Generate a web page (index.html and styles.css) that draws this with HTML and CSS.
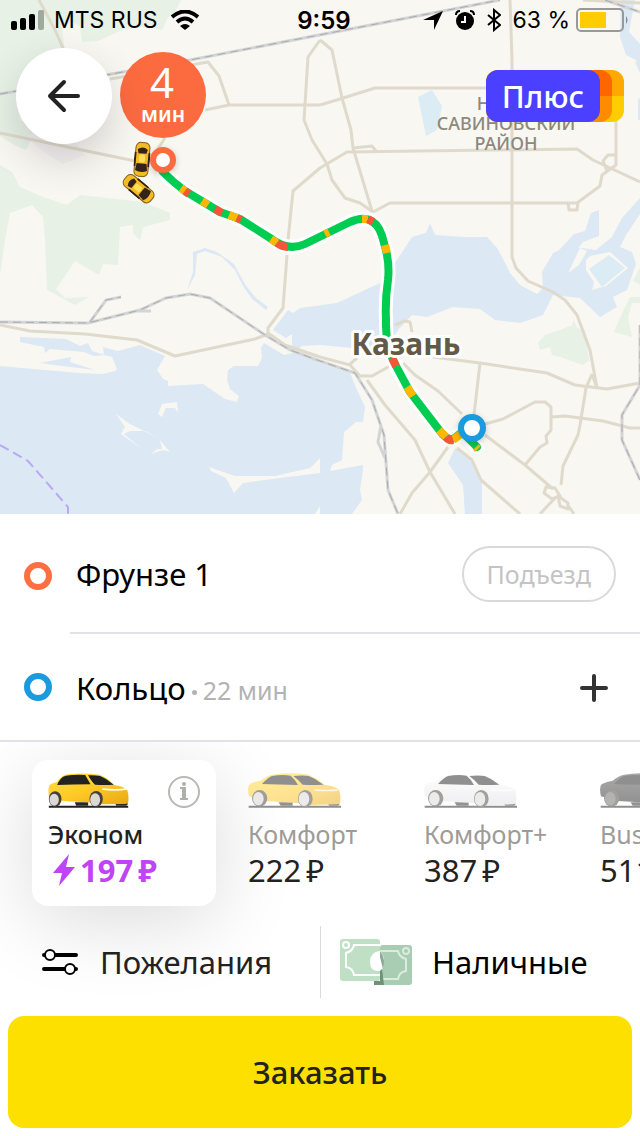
FILE: index.html
```html
<!DOCTYPE html>
<html lang="ru">
<head>
    <meta charset="UTF-8">
    <meta name="viewport" content="width=device-width, initial-scale=1">
    <title>Такси - заказ</title>
    <link rel="stylesheet" href="styles.css">
</head>
<body>
    <svg class="defs" width="0" height="0">
        <linearGradient id="yellow" x1="0" y1="0" x2="1" y2="1">
            <stop offset="0" stop-color="#ffe03a"/>
            <stop offset="0.5" stop-color="#ffca28"/>
            <stop offset="1" stop-color="#e8a712"/>
        </linearGradient>
        <linearGradient id="white" x1="0" y1="0" x2="0" y2="1">
            <stop offset="0" stop-color="#ffffff"/>
            <stop offset="1" stop-color="#dfdfe3"/>
        </linearGradient>
        <linearGradient id="black" x1="0" y1="0" x2="0" y2="1">
            <stop offset="0" stop-color="#555555"/>
            <stop offset="1" stop-color="#222222"/>
        </linearGradient>
        <symbol id="car-short" viewBox="0 0 242 105">
            <path d="M2 98h238v6H2z" fill="#222"/>
            <path d="M80 88h40v10H84zM200 86h38v9q-2 3-6 3h-28z" fill="#2b2723"/>
            <path d="M3 76Q-3 40 8 33q10-5 19-6Q40 5 62 3q50-4 92 2 24 8 42 30 28 5 41 15 6 18 3 38-2 6-12 5l-66 1-44-6-60-3-38-4z"/>
            <path d="M27 36Q36 12 53 8q30-5 58-2l16 28q-50 0-100 2zM118 7q22-1 38 2 20 8 41 26-30 2-56 0-8-4-23-28z" fill="#222"/>
            <path d="M134 33Q124 20 116 5" fill="none" stroke="#ffdc3c" stroke-width="4"/>
            <path d="M162 48q40 5 74 0" fill="none" stroke="#fff" stroke-width="5"/>
            <ellipse cx="21" cy="78" rx="19" ry="23" fill="#45403a"/>
            <ellipse cx="18" cy="80" rx="14" ry="18" fill="#dcd8d6"/>
            <ellipse cx="144" cy="78" rx="20" ry="24" fill="#45403a"/>
            <ellipse cx="141" cy="80" rx="15" ry="19" fill="#dcd8d6"/>
        </symbol>
        <symbol id="car-long" viewBox="0 0 279 105">
            <path d="M2 98h277v6H2z" fill="#222"/>
            <path d="M92 88h42v10H98zM236 88h38v7q-2 3-6 3h-24z" fill="#2b2723"/>
            <path d="M3 70Q-4 40 6 33q14-8 32-10Q56 8 72 5q58-8 110 0 24 10 48 30 32 5 43 15 7 16 3 40-3 4-10 4l-78 2-50-7-84-5z"/>
            <path d="M42 33Q60 13 72 9q30-5 56-1 16 14 22 28-60-1-108-3zM136 9q28-3 46 0 22 8 44 26-36 2-62 0-12-14-28-26z" fill="#222"/>
            <path d="M200 51q42 3 70 0" fill="none" stroke="#fff" stroke-opacity="0.8" stroke-width="4"/>
            <ellipse cx="35" cy="76" rx="23" ry="25" fill="#45403a"/>
            <ellipse cx="172" cy="77" rx="22" ry="26" fill="#45403a"/>
        </symbol>
        <symbol id="rims" viewBox="0 0 279 105">
            <ellipse cx="31" cy="77" rx="16" ry="20"/>
            <ellipse cx="168" cy="78" rx="16" ry="21"/>
        </symbol>
        <symbol id="taxi-top" viewBox="0 0 16 36">
            <rect x="1" y="1" width="14" height="34" rx="5" fill="#f3bb24" stroke="#80601a"/>
            <path d="M1 11v14M15 11v14" stroke="#33231a" stroke-width="2"/>
            <path d="M3 8q5-4 10 0l-1 4H4zM3 22h10l1 7q-6 3-12 0z" fill="#33231a"/>
            <rect x="5" y="13" width="6" height="8" rx="2" fill="#ffdf58"/>
        </symbol>
    </svg>

    <main class="page">
        <section class="map">
            <svg class="map_canvas" viewBox="0 0 640 514" preserveAspectRatio="xMidYMid slice">
                <!-- parks -->
                <g fill="#e7f1e6">
                    <path d="M0 0H181L174 14 168 17 162 30 148 26 122 30 98 41 82 42 80 26 72 22 62 28 66 60 16 90 20 120 36 130 26 150 14 145 0 136z"/>
                    <path d="M0 165L12 172 20 187 43 197 67 205 80 195 143 202 170 213V220L143 227 140 240 133 233V225L120 227 118 265 103 264 99 275 75 261 56 289 65 298 89 297 75 305 47 290 45 240 43 217 32 205 10 213 5 240 0 275z"/>
                    <path d="M538 343L545 335 560 330 572 325 574 320 577 328 585 330 589 360 583 365 560 357 552 355 550 347 540 350zM630 297H640V303L632 303 628 317 632 337 614 332 620 318zM640 268V285L633 281z"/>
                </g>
                <path d="M25 137l20-8 30 13 10 13-22 9-20-13z" fill="#f5eff0"/>
                <!-- water -->
                <g fill="#dce8f4">
                    <path d="M0 366L79 373 103 374 115 371 117 369 112 357 104 355 103 347 118 351 140 345 165 356 157 370 163 379 168 381V386L203 384 225 399 237 402 239 396 230 389 227 380 228 370 234 366 258 366 262 358 261 348 264 343 284 355 292 353 300 352 320 363 350 373 357 390 365 407 363 422 356 422 344 432 342 460 332 465 330 471 363 465 363 470 360 490 362 500 352 514H0z"/>
                    <path d="M20 337L66 339 80 346 88 343 92 351 105 355 94 356 84 352 50 349 45 353 44 347 20 342zM40 363L71 357 70 362 95 370 62 366z"/>
                    <path d="M273 330L288 310 293 313 300 308 337 303 380 283 397 260 412 237 426 233 430 224 435 235 463 237 487 237 497 248 502 257 510 273 520 285 537 294 543 288 542 272 553 253 568 246 596 250 612 237 622 218 640 198V214L626 235 620 247 632 252 636 264 627 290 613 297 617 307 600 317 580 298 553 295 543 315 520 323 495 320 480 309 453 307 427 317 412 315 398 330 385 350 352 348 320 345 302 346 292 353V334L286 338z"/>
                    <path d="M455 448L472 462 482 480V514H465L463 485 448 463zM187 290L193 272V252L205 248 217 252 234 264 246 286 256 298 268 307 266 310 252 299 243 286 235 270 222 257 205 251 197 254 195 275z"/>
                    <path d="M621 0h14l-6 32 11 12V62l-14-7-6-18zM635 62l5-3v14zM550 260l24-26 11-3 6-18 8-3v26l-16 6-14 17zM638 100l2-2v22h-2z"/>
                    <path d="M350 228L370 210 398 220 420 210 421 250 400 262z" fill="#f8f7f2"/>
                    <path d="M397 260L412 237 426 233 430 224 435 235 450 240V275H392z"/>
                </g>
                <path d="M418 97L432 90 442 106 437 130 426 136z" fill="#dcecf4"/>
                <!-- islands -->
                <path d="M116 414L130 424 150 434 160 440 170 452 163 450 151 454 157 449 162 449 160 440 146 431 130 431 124 434 142 449 121 434 125 427zM158 414L162 404 177 402 178 413 175 408 166 408 162 417zM209 467L235 476 275 476 310 468 320 458V473L280 478 243 483 234 493 226 478 211 471zM586 260L590 256 610 252 628 268 606 286 592 290 594 282 586 270zM568 273l12-25 7 3-8 14zM315 514l5-8v8z" fill="#f8f7f2"/>
                <path d="M589 269L609 255 625 268 602 287z" fill="#dcecf4"/>
                <!-- border over water -->
                <path d="M0 445L28 461 68 507V514" fill="none" stroke="#b9a9f5" stroke-width="2" stroke-dasharray="10 5"/>
                <!-- roads -->
                <g class="roads">
                    <path d="M39 0L55 30 75 75M0 133L135 161M110 79L208 62 219 76 229 105H320M205 110L229 105M157 150L165 138M320 40L308 57 304 120 312 140 327 164 332 180 345 198 360 203 373 212"/>
                    <path d="M320 105L340 99 375 88H500M320 40L332 50 342 98 351 130 353 148 372 211M510 0L512 60V257L516 268 528 281 553 292 565 300 577 315 590 350 597 388"/>
                    <path d="M288 240L293 191 320 168 347 152 577 149 593 160 640 182M353 148L372 146 376 151M373 212L390 203H577L600 186 602 175 616 165V115M568 203l1 7h8l1-8M616 155h-8l-5 6 4 10M583 0L640 3"/>
                    <path d="M287 255L283 308 268 328V334L255 339 175 356 137 340 85 334 30 331 0 325M268 333L285 345 320 357 350 365 360 376H372L390 366M349 365l8-7"/>
                    <path d="M395 325L405 321 410 322 412 332M433 357L480 363 547 373 575 385 607 389 640 383M480 363L474 415M403 363L415 375 438 391 462 414M485 424L503 419 535 402H545L551 407V430L546 436 547 443 540 447 525 465M551 417L565 416 603 421 630 428H640"/>
                    <path d="M485 435L525 465 553 489M592 374L586 388 580 425 578 435 563 466 561 485M592 374L597 388M540 514L555 498M367 380L385 405 415 440 430 472 455 514M448 447L430 472 412 493 400 514M457 448L472 460 481 480 520 514M546 487l9 1 5 8-8 3-8-6zM558 496l10 7v6l-8-3zM567 504l7 10"/>
                </g>
                <!-- railways -->
                <g class="rails">
                    <path d="M0 94L190 60 500 0M605 0L640 12M0 322L88 323 140 310 166 298 190 294 210 298 265 335 290 350 320 361 355 373 372 400 384 435 388 490 398 514M90 322L106 300 121 297M136 311h15M381 425l-3 17 7 16M640 325V385L622 415V440L640 480"/>
                </g>
                <g class="rails rails-dash">
                    <path d="M0 94L190 60 500 0M605 0L640 12M0 322L88 323 140 310 166 298 190 294 210 298 265 335 290 350 320 361 355 373 372 400 384 435 388 490 398 514M90 322L106 300 121 297M640 325V385L622 415V440L640 480"/>
                </g>
                <text class="map_district" x="506" y="110">НОВО-</text>
                <text class="map_district" x="506" y="130">САВИНОВСКИЙ</text>
                <text class="map_district" x="506" y="150">РАЙОН</text>
                <!-- route -->
                <g class="route">
                    <path class="route_edge" d="M163 172Q174 183 185 191L220 212 240 219 270 238Q288 252 305 244L350 222Q377 210 384 243 390 262 388 280 385 300 386 320 385 345 396 366L410 392 440 431Q449 443 456 437L462 432 477 447"/>
                    <path class="route_line" d="M163 172Q174 183 185 191L220 212 240 219 270 238Q288 252 305 244L350 222Q377 210 384 243 390 262 388 280 385 300 386 320 385 345 396 366L410 392 440 431Q449 443 456 437L462 432 477 447"/>
                    <path class="route_slow" d="M181 188l4 3M202 201l6 4M229 215l8 3M271 239l6 4M325 234l4-2M362 219l6 0M385 245l2 8M407 387l6 9M439 430l7 7M453 440l9-7M476 447l2 2"/>
                    <path class="route_jam" d="M185 191l4 3M215 209l7 4M237 218l4 2M277 243q5 4 11 4M368 219l5 3M392 358l4 8M446 437q3 4 7 3"/>
                </g>
                <text class="map_city" x="406" y="355">Казань</text>
                <use href="#taxi-top" x="134" y="141" width="16" height="37" transform="rotate(5 142 159)"/>
                <use href="#taxi-top" x="131" y="170" width="16" height="37" transform="rotate(-50 139 189)"/>
                <g class="pins">
                    <circle cx="163" cy="160" r="10" fill="#fff" stroke="#fc6b40" stroke-width="6"/>
                    <circle cx="472" cy="428" r="11" fill="#fff" stroke="#1a9be0" stroke-width="6"/>
                </g>
                <circle cx="163" cy="95" r="43" fill="#fc6b40"/>
                <text class="pin_num" x="162" y="98">4</text>
                <text class="pin_unit" x="163" y="122">мин</text>
            </svg>
            <div class="map_over">
                <header class="status">
                    <div class="status_left">
                        <svg width="34" height="20" viewBox="0 0 34 20">
                            <rect x="0" y="11" width="6" height="9" rx="2"/>
                            <rect x="9" y="8" width="6" height="12" rx="2"/>
                            <rect x="18" y="4" width="6" height="16" rx="2"/>
                            <rect x="27" y="0" width="6" height="20" rx="2" opacity="0.3"/>
                        </svg>
                        <span>MTS RUS</span>
                        <svg class="wifi" width="28" height="20" viewBox="0 0 28 20" fill="none" stroke="#000" stroke-width="4">
                            <path d="M1 7Q14-4 27 7M6 12q8-7 16 0"/>
                            <path d="M9 16q5-4 10 0l-5 4z" fill="#000" stroke="none"/>
                        </svg>
                    </div>
                    <b class="status_time">9:59</b>
                    <div class="status_right">
                        <svg width="20" height="20" viewBox="0 0 20 20"><path d="M0 10L20 1 11 20V10z"/></svg>
                        <svg class="alarm" width="20" height="20" viewBox="0 0 20 20">
                            <circle cx="10" cy="11" r="9"/>
                            <path d="M1 5Q1 1 5 1M19 5Q19 1 15 1" fill="none" stroke="#000" stroke-width="2"/>
                            <path d="M10 6v6H6" fill="none" stroke="#fff" stroke-width="2"/>
                        </svg>
                        <svg class="bt" width="14" height="24" viewBox="0 0 14 24" fill="none" stroke="#000" stroke-width="2"><path d="M1 7l12 10-6 5V2l6 5L1 17"/></svg>
                        <span>63 %</span>
                        <svg class="battery" width="53" height="24" viewBox="0 0 53 24">
                            <rect x="1" y="1" width="46" height="22" rx="4" fill="none" stroke="#999" stroke-width="2"/>
                            <rect x="4" y="4" width="26" height="16" rx="1" fill="#fc0"/>
                            <path d="M50 8q3 4 0 8z" fill="#888"/>
                        </svg>
                    </div>
                </header>
                <div class="tools">
                    <button class="back" type="button" aria-label="Назад">
                        <svg width="34" height="34" viewBox="0 0 34 34" fill="none" stroke="#222" stroke-width="4" stroke-linecap="round" stroke-linejoin="round"><path d="M31 17H3M17 3L3 17l14 14"/></svg>
                    </button>
                    <button class="plus" type="button"><span class="plus_mid"><span class="plus_text">Плюс</span></span></button>
                </div>
            </div>
        </section>

        <section class="address">
            <div class="point">
                <i class="dot"></i>
                <div class="point_row">
                    <span class="point_name">Фрунзе 1</span>
                    <button class="porch" type="button">Подъезд</button>
                </div>
            </div>
            <div class="point point-to">
                <i class="dot dot-to"></i>
                <div class="point_row">
                    <span class="point_name">Кольцо<small>22 мин</small></span>
                    <button class="add" type="button" aria-label="Добавить">
                        <svg width="28" height="28" viewBox="0 0 28 28" stroke="#333" stroke-width="4" stroke-linecap="round"><path d="M14 2v24M2 14h24"/></svg>
                    </button>
                </div>
            </div>
        </section>

        <section class="order">
            <ul class="tariffs">
                <li class="tariff current">
                    <button class="choice" type="button">
                        <svg class="car yellow" width="81" height="35"><use href="#car-short"/></svg>
                        <span class="tariff_name">Эконом</span>
                        <span class="price">
                            <svg width="24" height="32" viewBox="0 0 24 32" fill="#c044f5"><path d="M17 0L1 19h9L7 32 23 13H14z"/></svg>197&thinsp;₽
                        </span>
                    </button>
                    <button class="info" type="button" aria-label="Подробнее">
                        <svg width="32" height="32" viewBox="0 0 32 32">
                            <circle cx="16" cy="16" r="15" fill="none" stroke="#b9b8b5" stroke-width="2"/>
                            <circle cx="16" cy="8" r="2" fill="#b0afac"/>
                            <path d="M12 11h6v11h2v2h-8v-2h2v-9h-2z" fill="#b0afac"/>
                        </svg>
                    </button>
                </li>
                <li class="tariff">
                    <button class="choice" type="button">
                        <svg class="car yellow" width="93" height="35"><use href="#car-long"/><use href="#rims" fill="#dcd8d6"/></svg>
                        <span class="tariff_name">Комфорт</span>
                        <span class="price">222&thinsp;₽</span>
                    </button>
                </li>
                <li class="tariff">
                    <button class="choice" type="button">
                        <svg class="car white" width="93" height="35"><use href="#car-long"/><use href="#rims" fill="#dcd8d6"/></svg>
                        <span class="tariff_name">Комфорт+</span>
                        <span class="price">387&thinsp;₽</span>
                    </button>
                </li>
                <li class="tariff">
                    <button class="choice" type="button">
                        <svg class="car black" width="93" height="35"><use href="#car-long"/><use href="#rims" fill="#6a6a6a"/></svg>
                        <span class="tariff_name">Business</span>
                        <span class="price">511&thinsp;₽</span>
                    </button>
                </li>
            </ul>
            <div class="options">
                <button class="option" type="button">
                    <svg width="36" height="26" viewBox="0 0 36 26" stroke="#000" stroke-width="4" stroke-linecap="round">
                        <path d="M2 6h32M2 20h32"/>
                        <circle cx="8" cy="6" r="5" fill="#fff" stroke-width="2"/>
                        <circle cx="28" cy="20" r="5" fill="#fff" stroke-width="2"/>
                    </svg>
                    Пожелания
                </button>
                <button class="option option-cash" type="button">
                    <svg width="72" height="46" viewBox="0 0 72 46" fill="none">
                        <rect width="40" height="42" rx="3" fill="#c0e0c6"/>
                        <rect x="40" y="6" width="32" height="40" rx="3" fill="#a8cdb2"/>
                        <path d="M40 6H14q-1 6-8 8v14q7 1 8 8h26" stroke="#fff" stroke-width="2"/>
                        <path d="M40 12h18q1 6 8 8v12q-7 1-8 8H40" stroke="#dcebdc" stroke-width="2"/>
                        <circle cx="6" cy="6" r="3" stroke="#fff" stroke-width="2"/>
                        <circle cx="66" cy="12" r="3" stroke="#dcebdc" stroke-width="2"/>
                        <path d="M40 12q-10 1-10 11t10 9q4-2 4-9t-4-11z" fill="#fff"/>
                        <path d="M40 32l2-2 2 16H34v-4h6z" fill="#6f9278"/>
                        <path d="M40 12v6l3 12q3-10-3-18z" fill="#8aa893"/>
                    </svg>
                    Наличные
                </button>
            </div>
            <button class="submit" type="button">Заказать</button>
        </section>
    </main>
</body>
</html>
```
FILE: styles.css
```css
body, ul, li, button {
    margin: 0;
    padding: 0;
}
ul {
    list-style: none;
}
body {
    background-color: #ffffff;
    font-family: "Noto Sans", sans-serif;
    color: #000000;
}
button {
    border: 0;
    background: none;
    font: inherit;
    color: inherit;
    cursor: pointer;
}
svg {
    display: block;
    flex: none;
}
.defs {
    position: absolute;
}
.page {
    display: flex;
    flex-direction: column;
    min-height: 100vh;
}

/* map */
.map {
    display: grid;
    flex: 1 0 320px;
    background-color: #f8f7f2;
    overflow: hidden;
}
.map_canvas, .map_over {
    grid-area: 1 / 1;
    min-height: 0;
}
.map_canvas {
    width: 100%;
    height: 100%;
}
.map_over {
    z-index: 1;
}
.roads {
    fill: none;
    stroke: #dfdacb;
    stroke-width: 3;
    stroke-linejoin: round;
}
.rails {
    fill: none;
    stroke: #d3d4d5;
    stroke-width: 3;
}
.rails-dash {
    stroke: #a9abad;
    stroke-width: 1;
    stroke-dasharray: 8 5;
}
.map text {
    text-anchor: middle;
}
.map_district {
    font-size: 18px;
    font-weight: 500;
    fill: #8c887b;
}
.map_city {
    font-size: 30px;
    font-weight: 700;
    fill: #625a46;
    stroke: #ffffff;
    stroke-width: 6;
    stroke-linejoin: round;
    paint-order: stroke;
}
.route {
    fill: none;
    stroke-linejoin: round;
}
.route_edge {
    stroke: #ffffff;
    stroke-width: 14;
    stroke-linecap: round;
}
.route_line {
    stroke: #00cc52;
    stroke-width: 8;
    stroke-linecap: round;
}
.route_slow {
    stroke: #ffb700;
    stroke-width: 8;
}
.route_jam {
    stroke: #f85438;
    stroke-width: 8;
}
.pins {
    filter: drop-shadow(0 2px 3px rgba(0, 0, 0, 0.2));
}
.pin_num {
    font-size: 42px;
    fill: #ffffff;
}
.pin_unit {
    font-size: 21px;
    font-weight: 600;
    fill: #ffffff;
}

.status {
    display: grid;
    grid-template-columns: 1fr auto 1fr;
    align-items: center;
    height: 40px;
    padding: 0 11px;
    font-family: Inter, sans-serif;
    font-size: 23px;
}
.status_left, .status_right {
    display: flex;
    align-items: center;
    white-space: nowrap;
}
.status_left {
    gap: 9px;
}
.status_right {
    justify-content: flex-end;
    gap: 6px;
}
.status_time {
    padding-left: 8px;
    font-size: 24px;
    font-weight: 600;
}
.wifi {
    margin-left: 4px;
}
.alarm, .bt {
    margin-left: 6px;
}
.bt {
    margin-right: 5px;
}
.tools {
    display: flex;
    align-items: center;
    justify-content: space-between;
    padding: 8px 16px;
}
.back {
    display: flex;
    align-items: center;
    justify-content: center;
    width: 96px;
    height: 96px;
    border-radius: 50%;
    background-color: #ffffff;
    box-shadow: 0 16px 40px rgba(0, 0, 0, 0.16);
}
.plus, .plus_mid, .plus_text {
    display: block;
    border-radius: 12px;
}
.plus {
    padding-right: 12px;
    background-image: linear-gradient(#ffa900 50%, #ffcc00 50%);
}
.plus_mid {
    padding-right: 12px;
    background-image: linear-gradient(#ff6600 50%, #ff8c00 50%);
}
.plus_text {
    padding: 0 16px;
    background-color: #4b40ff;
    color: #ffffff;
    font-size: 31px;
    font-weight: 500;
    line-height: 52px;
}

/* address */
.point {
    display: flex;
    align-items: center;
    padding-left: 24px;
}
.dot {
    box-sizing: border-box;
    width: 28px;
    height: 28px;
    margin-right: 18px;
    border: 6px solid #ff6f41;
    border-radius: 50%;
}
.dot-to {
    border-color: #1a9be0;
}
.point_row {
    display: flex;
    flex: 1;
    align-items: center;
    justify-content: space-between;
    min-height: 116px;
    padding: 2px 24px 0 6px;
    border-bottom: 2px solid #e2e1e7;
    font-size: 31px;
}
.point:first-child .dot {
    margin-top: 4px;
}
.point-to {
    border-bottom: 2px solid #e2e1e7;
}
.point-to .point_row {
    min-height: 104px;
    padding-right: 32px;
    border-bottom: 0;
}
.point_name small {
    color: #b3b3b3;
    font-size: 25px;
}
.point_name small::before {
    content: "";
    display: inline-block;
    width: 5px;
    height: 5px;
    margin: 0 6px;
    border-radius: 50%;
    background-color: #b3b3b3;
    vertical-align: 5px;
}
.porch {
    padding: 0 23px;
    border: 2px solid #d9d9d9;
    border-radius: 28px;
    color: #c4c4c4;
    font-size: 25px;
    line-height: 52px;
}

/* order */
.order {
    overflow: hidden;
    padding: 18px 8px 8px;
}
.tariffs {
    display: flex;
    padding-left: 24px;
}
.tariff {
    display: flex;
    flex: none;
    align-items: flex-start;
    justify-content: space-between;
    box-sizing: border-box;
    width: 176px;
    padding: 13px 16px 18px;
}
.tariff.current {
    width: 184px;
    margin-right: 16px;
    border-radius: 16px;
    background-color: #ffffff;
    box-shadow: 0 16px 80px rgba(0, 0, 0, 0.14);
}
.choice {
    text-align: left;
    white-space: nowrap;
}
.car {
    opacity: 0.5;
}
.current .car {
    opacity: 1;
}
.yellow {
    fill: url(#yellow);
}
.white {
    fill: url(#white);
}
.black {
    fill: url(#black);
}
.tariff_name {
    display: block;
    padding-top: 8px;
    color: #9e9b98;
    font-size: 25px;
    line-height: 36px;
}
.price {
    display: flex;
    align-items: center;
    color: #222222;
    font-size: 31px;
    line-height: 36px;
}
.current .tariff_name {
    color: #222222;
    font-weight: 500;
}
.current .price {
    gap: 4px;
    padding-left: 4px;
    color: #c044f5;
    font-weight: 700;
}
.info {
    margin-top: 3px;
}
.options {
    display: grid;
    grid-template-columns: 1fr 1fr;
    padding: 20px 0 18px;
}
.option {
    display: flex;
    align-items: center;
    gap: 22px;
    height: 72px;
    padding-left: 34px;
    color: #222222;
    font-size: 31px;
}
.option-cash {
    gap: 20px;
    padding-left: 19px;
    border-left: 1px solid #dbdad7;
    color: #000000;
}
.submit {
    display: block;
    width: 100%;
    border-radius: 16px;
    background-color: #fde000;
    color: #222222;
    font-size: 31px;
    font-weight: 500;
    line-height: 112px;
}
```
